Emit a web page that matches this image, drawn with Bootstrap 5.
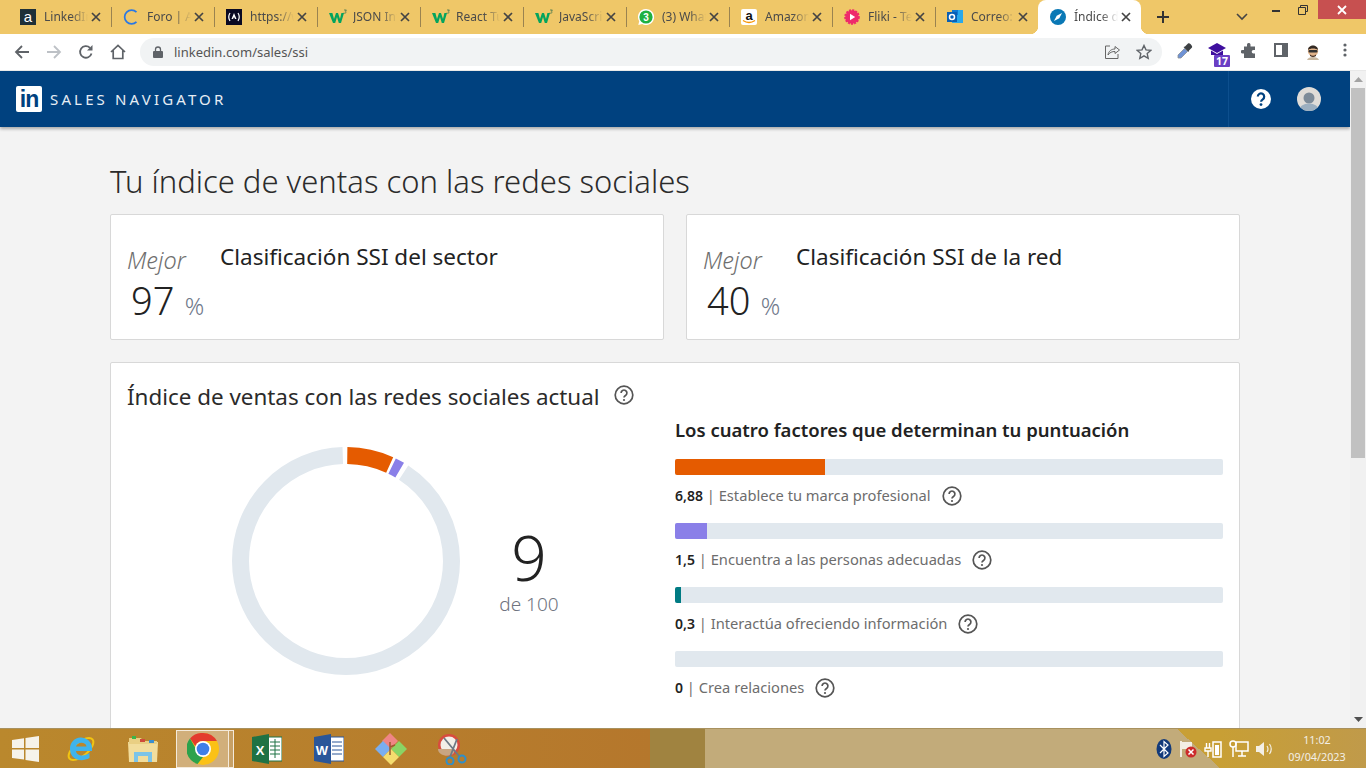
<!DOCTYPE html>
<html lang="es">
<head>
  <meta charset="UTF-8" />
  <meta name="viewport" content="width=device-width, initial-scale=1.0" />
  <title>Índice de ventas con las redes sociales</title>
  <link href="https://cdn.jsdelivr.net/npm/bootstrap@5.3.3/dist/css/bootstrap.min.css" rel="stylesheet">
  <style>
    html, body { height: 100%; overflow: hidden; }
    body { font-family: "Noto Sans", "Open Sans", sans-serif; background: #f3f3f3; color: #222; }
    .shell { height: 768px; }
    svg { flex: none; }

    /* browser chrome */
    .tabstrip { height: 34px; background: #efc768; padding-left: 8px; flex: none; }
    .btab { width: 103px; height: 34px; padding: 0 10px 0 12px; font-size: 12px; color: #4a4a4a; flex: none; position: relative; }
    .btab + .btab .tabsep { border-left: 1px solid #9a8350; height: 20px; margin: 0 11px 0 -12px; flex: none; }
    .btab-title { width: 44px; margin-left: 8px; white-space: nowrap; overflow: hidden; flex: none;
      -webkit-mask-image: linear-gradient(90deg, #000 62%, transparent 100%); mask-image: linear-gradient(90deg, #000 62%, transparent 100%); }
    .btab-w3 { margin-left: 6px; }
    .btab-x { width: 10px; height: 10px; margin-left: 3px; flex: none; }
    .btab-on { background: #fff; border-radius: 8px 8px 0 0; }
    .btab-on::before, .btab-on::after { content: ""; position: absolute; bottom: 0; width: 8px; height: 8px; }
    .btab-on::before { left: -8px; background: radial-gradient(circle at 0 0, transparent 8px, #fff 8.5px); }
    .btab-on::after { right: -8px; background: radial-gradient(circle at 100% 0, transparent 8px, #fff 8.5px); }
    .tab-plus { margin-left: 15px; width: 14px; height: 14px; }
    .tab-chev { margin-left: 66px; width: 12px; height: 8px; }
    .winctl { margin-left: auto; height: 19px; align-self: flex-start; }
    .winmin { width: 8px; height: 2px; background: #333; margin-right: 18px; margin-top: 2px; }
    .winmax { width: 10px; height: 10px; margin-right: 10px; }
    .winclose { width: 48px; height: 19px; background: #c75050; }

    .toolbar { height: 37px; background: #fff; padding: 3px 0 3px 0; flex: none; border-bottom: 1px solid #e8e8e8; }
    .tool-ic { width: 32px; display: flex; justify-content: center; flex: none; }
    .toolstart { padding-left: 6px; }
    .omni { width: 1022px; height: 28px; margin-left: 6px; background: #f1f3f4; border-radius: 14px; padding: 0 10px 0 13px; font-size: 13px; color: #555; flex: none; }
    .omni-url { margin-left: 11px; padding-top: 1px; }
    .omni-end { margin-left: auto; gap: 16px; }
    .toolright { padding-left: 7px; }
    .ext-badge { position: absolute; right: 3px; bottom: -6px; width: 16px; background: #6b3fc4; color: #fff; font-size: 10.5px; font-weight: 700; line-height: 12px; text-align: center; border-radius: 1px; }

    /* page */
    .viewport { flex: 1 1 auto; min-height: 0; overflow: hidden; }
    .pagearea { flex: 1 1 auto; min-width: 0; overflow: hidden; }
    .sn-header { height: 56px; background: #00417f; box-shadow: 0 2px 3px rgba(0,0,0,.3); padding-left: 16px; flex: none; position: relative; }
    .in-logo { width: 26px; height: 26px; background: #fff; border-radius: 2px; color: #00417f; font: 700 23px/27px "Liberation Sans", sans-serif; text-align: center; letter-spacing: -1px; }
    .sn-name { color: #e6edf4; font-size: 15px; letter-spacing: 3.15px; margin-left: 8px; }
    .sn-right { margin-left: auto; border-left: 1px solid #0d4f8e; height: 56px; padding-left: 22px; padding-right: 29px; gap: 26px; }
    .content-wrap { width: 1130px; margin-left: 110px; }
    .page-title { font-size: 31px; font-weight: 300; line-height: 40px; margin: 34px 0 13px; color: #2b2b2b; }
    .sn-card { border: 1px solid #d8d8d8; border-radius: 2px; background: #fff; }
    .rank-card { height: 126px; width: 554px; padding: 27px 16px 0; }
    .rank-left { width: 93px; flex: none; }
    .rank-mejor { font-size: 23.5px; font-style: italic; font-weight: 300; color: #6f6f6f; line-height: 36px; }
    .rank-num { font-size: 38px; font-weight: 300; line-height: 44px; color: #222; padding-left: 4px; }
    .rank-pct { font-size: 24px; font-weight: 300; color: #70788a; margin-left: 4px; }
    .rank-title { font-size: 22.5px; line-height: 30px; color: #222; }
    .score-card { margin-top: 22px; height: 420px; padding: 18px 16px 0; }
    .score-title { font-size: 22.4px; line-height: 32px; color: #2b2b2b; }
    .donut-col { width: 548px; flex: none; padding: 34px 0 0 105px; }
    .score-num { font-size: 62px; font-weight: 300; line-height: 69px; color: #222; }
    .score-of { font-size: 19px; font-weight: 300; color: #6f7480; line-height: 24px; }
    .score-box { width: 100px; margin-left: 19px; text-align: center; padding-bottom: 23px; }
    .factors-col { width: 548px; flex: none; padding-top: 4px; }
    .factors-title { font-size: 18.5px; font-weight: 600; line-height: 26px; color: #222; margin: 0 0 16px; }
    .factor { height: 64px; }
    .factor .progress { height: 16px; background: #e1e8ee; border-radius: 2px; }
    .factor-label { font-size: 14.7px; line-height: 20px; margin-top: 10px; color: #6d6d6d; }
    .factor-label b { color: #222; font-weight: 600; font-size: 14px; }
    .hl-q { width: 20px; height: 20px; margin-left: 11px; flex: none; }
    .hl-q.score-q { margin-top: -4px; margin-left: 14px; }
    .fill-o { background: #e55b00; }
    .fill-p { background: #8a7fe8; }
    .fill-t { background: #007b83; }

    /* scrollbar */
    .fakebar { width: 16px; background: #f1f1f1; flex: none; }
    .fakebar-up { height: 17px; }
    .fakebar-thumb { height: 370px; background: #c1c1c1; margin: 0 1px; }
    .fakebar-down { height: 17px; margin-top: auto; }

    /* taskbar */
    .taskbar { height: 40px; flex: none; border-top: 1px solid #a8915f;
      background:
        linear-gradient(90deg, #c89f35, #c09a4a) right / 146px 100% no-repeat,
        linear-gradient(to top right, transparent 50%, #c89f35 50%) 1177px 0 / 43px 100% no-repeat,
        linear-gradient(90deg, #ba882d 0, #b5772c 650px, #a08340 650px, #a08340 705px, #c2ab7a 705px); }
    .task-start { width: 50px; padding-left: 12px; }
    .task-ic { width: 62px; height: 39px; display: flex; align-items: center; justify-content: center; flex: none; }
    .task-on { width: 53px; height: 38px; margin-left: 2px; background: #d1af7b; border: 1px solid #f4eadb; }
    .task-sliver { width: 5px; height: 38px; border: 1px solid #f4eadb; border-left: 0; margin-right: 2px; background: #c7a065; }
    .task-tray { margin-left: auto; gap: 7px; padding-right: 13px; }
    .task-clock { color: #f3efe6; font-size: 10.8px; line-height: 17px; text-align: center; margin-top: -1px; width: 72px; }
  </style>
</head>
<body>
<svg width="0" height="0" class="d-none">
  <symbol id="x-ic" viewBox="0 0 10 10"><path d="M1 1l8 8M9 1l-8 8" stroke="#444" stroke-width="1.7" fill="none"/></symbol>
  <symbol id="w3-ic" viewBox="0 0 18 16"><path d="M0 4h3.4l1.6 6 2-6h2l2 6 1.4-6h2.6l-3 10h-2.2L8 8l-1.8 6H4z" fill="#04a45d"/><path d="M15 1h2.4l-1 1.2c.8.2 1.1 1.4-.1 1.9-.6.2-1.2.1-1.6-.2" stroke="#2b6b4c" stroke-width=".7" fill="none"/></symbol>
  <symbol id="q-ic" viewBox="0 0 20 20"><circle cx="10" cy="10" r="8.8" fill="none" stroke="#555" stroke-width="1.7"/><path d="M7.1 7.900a2.900 2.900 0 1 1 4.400 2.500c-1 .6-1.500 1-1.500 2.100" fill="none" stroke="#555" stroke-width="1.7"/><circle cx="10" cy="15" r="1.100" fill="#555"/></symbol>
</svg>

<div class="shell d-flex flex-column">
  <div class="tabstrip d-flex align-items-center">
    <div class="btab d-flex align-items-center">
      <svg width="16" height="16" viewBox="0 0 16 16"><rect width="16" height="16" fill="#1f3038"/><text x="8" y="13" text-anchor="middle" font-family="Liberation Sans" font-size="15" fill="#fff">a</text></svg>
      <span class="btab-title">LinkedIn</span><svg class="btab-x"><use href="#x-ic"/></svg>
    </div>
    <div class="btab d-flex align-items-center"><span class="tabsep"></span>
      <svg width="16" height="16" viewBox="0 0 16 16"><path d="M13.500 3.200A6.900 6.900 0 1 0 13.500 12.800" fill="none" stroke="#2a78e4" stroke-width="1.700"/></svg>
      <span class="btab-title">Foro | Alura</span><svg class="btab-x"><use href="#x-ic"/></svg>
    </div>
    <div class="btab d-flex align-items-center"><span class="tabsep"></span>
      <svg width="16" height="16" viewBox="0 0 16 16"><rect width="16" height="16" fill="#0a0a23"/><path d="M4 4Q1.500 8 4 12M12 4q2.500 4 0 8" stroke="#fff" stroke-width="1.200" fill="none"/><path d="M8 4l2.500 6H9L8 8l-1 2H5.500z" fill="#fff"/></svg>
      <span class="btab-title">https://www</span><svg class="btab-x"><use href="#x-ic"/></svg>
    </div>
    <div class="btab d-flex align-items-center"><span class="tabsep"></span>
      <svg width="18" height="16"><use href="#w3-ic"/></svg>
      <span class="btab-title btab-w3">JSON Intro</span><svg class="btab-x"><use href="#x-ic"/></svg>
    </div>
    <div class="btab d-flex align-items-center"><span class="tabsep"></span>
      <svg width="18" height="16"><use href="#w3-ic"/></svg>
      <span class="btab-title btab-w3">React Tutorial</span><svg class="btab-x"><use href="#x-ic"/></svg>
    </div>
    <div class="btab d-flex align-items-center"><span class="tabsep"></span>
      <svg width="18" height="16"><use href="#w3-ic"/></svg>
      <span class="btab-title btab-w3">JavaScript</span><svg class="btab-x"><use href="#x-ic"/></svg>
    </div>
    <div class="btab d-flex align-items-center"><span class="tabsep"></span>
      <svg width="16" height="16" viewBox="0 0 16 16"><path d="M8 0a8 8 0 0 0-6.800 12.200L.3 16l3.900-1A8 8 0 1 0 8 0z" fill="#fff"/><circle cx="8" cy="8" r="6.600" fill="#1fb141"/><text x="8" y="11.500" text-anchor="middle" font-family="Liberation Sans" font-weight="700" font-size="10" fill="#fff">3</text></svg>
      <span class="btab-title">(3) WhatsApp</span><svg class="btab-x"><use href="#x-ic"/></svg>
    </div>
    <div class="btab d-flex align-items-center"><span class="tabsep"></span>
      <svg width="16" height="16" viewBox="0 0 16 16"><rect width="16" height="16" rx="2" fill="#fff"/><text x="8" y="10.500" text-anchor="middle" font-family="Liberation Sans" font-weight="700" font-size="13" fill="#111">a</text><path d="M2 11.500q6 4 12 0" stroke="#f79400" stroke-width="1.300" fill="none"/></svg>
      <span class="btab-title">Amazon.es</span><svg class="btab-x"><use href="#x-ic"/></svg>
    </div>
    <div class="btab d-flex align-items-center"><span class="tabsep"></span>
      <svg width="16" height="16" viewBox="0 0 16 16"><circle cx="8" cy="8" r="6.800" fill="#ee2a6b" stroke="#ee2a6b" stroke-width="2" stroke-dasharray="2 1.200"/><path d="M6 4.800v6.400L11.200 8z" fill="#fff"/></svg>
      <span class="btab-title">Fliki - Text</span><svg class="btab-x"><use href="#x-ic"/></svg>
    </div>
    <div class="btab d-flex align-items-center"><span class="tabsep"></span>
      <svg width="16" height="16" viewBox="0 0 16 16"><rect x="5" y="1" width="11" height="13" fill="#29a8ea"/><rect x="5" y="1" width="6" height="5" fill="#0f78d4"/><rect y="3" width="10" height="10" fill="#0a5fb4"/><circle cx="5" cy="8" r="2.500" fill="none" stroke="#fff" stroke-width="1.500"/></svg>
      <span class="btab-title">Correo: Pablo</span><svg class="btab-x"><use href="#x-ic"/></svg>
    </div>
    <div class="btab btab-on d-flex align-items-center">
      <svg width="16" height="16" viewBox="0 0 16 16"><circle cx="8" cy="8" r="8" fill="#0a78b5"/><path d="M12 4L9.300 9.300 4 12l2.700-5.300z" fill="#fff"/></svg>
      <span class="btab-title">Índice de ventas</span><svg class="btab-x"><use href="#x-ic"/></svg>
    </div>
    <svg class="tab-plus" viewBox="0 0 14 14"><path d="M7 1v12M1 7h12" stroke="#333" stroke-width="2"/></svg>
    <svg class="tab-chev" viewBox="0 0 12 8"><path d="M1 1l5 5 5-5" stroke="#444" stroke-width="1.600" fill="none"/></svg>
    <div class="winctl d-flex align-items-center">
      <span class="winmin"></span>
      <svg class="winmax" viewBox="0 0 10 10"><path d="M2.500 2.500V.5h7v6h-2M.5 2.500h7v7h-7z" fill="none" stroke="#333" stroke-width="1"/></svg>
      <span class="winclose d-flex align-items-center justify-content-center"><svg width="10" height="10" viewBox="0 0 10 10"><path d="M1 1l8 8M9 1l-8 8" stroke="#fff" stroke-width="1.800"/></svg></span>
    </div>
  </div>

  <div class="toolbar d-flex align-items-center">
    <div class="d-flex toolstart">
      <span class="tool-ic"><svg width="16" height="16" viewBox="0 0 16 16"><path d="M15 8H2M8 2L2 8l6 6" stroke="#5f6368" stroke-width="1.800" fill="none"/></svg></span>
      <span class="tool-ic"><svg width="16" height="16" viewBox="0 0 16 16"><path d="M1 8h13M8 2l6 6-6 6" stroke="#bdc1c6" stroke-width="1.800" fill="none"/></svg></span>
      <span class="tool-ic"><svg width="16" height="16" viewBox="0 0 16 16"><path d="M13.500 9.500A5.800 5.800 0 1 1 12 3.800" stroke="#5f6368" stroke-width="1.800" fill="none"/><path d="M14.500 1v5.500H9z" fill="#5f6368"/></svg></span>
      <span class="tool-ic"><svg width="16" height="16" viewBox="0 0 16 16"><path d="M1 8l7-6.500L15 8M3.200 6.500V14.500h9.600V6.500" stroke="#5f6368" stroke-width="1.700" fill="none"/></svg></span>
    </div>
    <div class="omni d-flex align-items-center">
      <svg width="10" height="12" viewBox="0 0 10 12"><path d="M2.500 5V3.500a2.500 2.500 0 0 1 5 0V5" fill="none" stroke="#5f6368" stroke-width="1.300"/><rect y="5" width="10" height="7" rx="1" fill="#5f6368"/></svg>
      <span class="omni-url">linkedin.com/sales/ssi</span>
      <span class="omni-end d-flex align-items-center">
        <svg width="16" height="16" viewBox="0 0 16 16"><path d="M6 2H1.500v12.500H14V10" stroke="#666" fill="none"/><path d="M4 11c.5-4 3.500-6 7-6V2.500L15.500 6 11 9.500V7.500C8.500 7.300 5.500 8.500 4 11z" stroke="#666" fill="none"/></svg>
        <svg width="16" height="16" viewBox="0 0 16 16"><path d="M8 1.500l2 4.400 4.700.5-3.500 3.200 1 4.700L8 11.900l-4.200 2.400 1-4.700-3.500-3.200 4.700-.5z" stroke="#5f6368" stroke-width="1.400" fill="none"/></svg>
      </span>
    </div>
    <div class="d-flex toolright">
      <span class="tool-ic"><svg width="16" height="16" viewBox="0 0 16 16"><path d="M7.500 5.500l3 3L4 15H1v-3z" fill="#6f93d6" stroke="#8a8f96" stroke-width=".8"/><path d="M6.500 4l1.500-.5 3-3c1.500-1 5 2.500 4 4l-3 3-.5 1.500z" fill="#3d4043"/></svg></span>
      <span class="tool-ic position-relative"><svg width="18" height="14" viewBox="0 0 18 14"><path d="M9 0l9 5-9 5-9-5z" fill="#3f0f9e"/><path d="M3 7.500V12h12V7.500L9 11z" fill="#3f0f9e"/></svg><span class="ext-badge">17</span></span>
      <span class="tool-ic"><svg width="16" height="16" viewBox="0 0 16 16"><path d="M6 1.500a1.800 1.800 0 0 1 3.500 0V3.500H14V7h-1.500a1.800 1.800 0 0 0 0 3.600H14V15H3v-4.500H1.500a1.800 1.800 0 0 1 0-3.600H3V3.500h3z" fill="#5f6368"/></svg></span>
      <span class="tool-ic"><svg width="14" height="14" viewBox="0 0 14 14"><rect x="1" y="1" width="12" height="12" fill="#fff" stroke="#5f6368" stroke-width="2"/><rect x="8" y="1" width="5" height="12" fill="#5f6368"/></svg></span>
      <span class="tool-ic"><svg width="16" height="18" viewBox="0 0 16 18"><path d="M2 17c1-4 11-4 12 0z" fill="#c9b8a0"/><circle cx="8" cy="8" r="5.200" fill="#e2b48a"/><path d="M3 7c0-6 10-6 10 0-2-2-8-2-10 0z" fill="#332a24"/><rect x="3.500" y="7" width="9" height="2.500" fill="#333" rx="1"/><path d="M5 11.500q3 2.500 6 0V13q-3 2-6 0z" fill="#4a3325"/></svg></span>
      <span class="tool-ic"><svg width="4" height="14" viewBox="0 0 4 14"><circle cx="2" cy="2" r="1.600" fill="#5f6368"/><circle cx="2" cy="7" r="1.600" fill="#5f6368"/><circle cx="2" cy="12" r="1.600" fill="#5f6368"/></svg></span>
    </div>
  </div>

  <div class="viewport d-flex">
    <div class="pagearea d-flex flex-column">
      <header class="sn-header d-flex align-items-center">
        <span class="in-logo">in</span>
        <span class="sn-name">SALES NAVIGATOR</span>
        <div class="sn-right d-flex align-items-center">
          <svg width="20" height="20" viewBox="0 0 20 20"><circle cx="10" cy="10" r="10" fill="#fff"/><path d="M6.800 7.600a3.200 3.200 0 1 1 5 2.700c-1.200.8-1.700 1.200-1.700 2.500" fill="none" stroke="#00417f" stroke-width="2.200"/><circle cx="10" cy="15.600" r="1.400" fill="#00417f"/></svg>
          <svg width="24" height="24" viewBox="0 0 24 24"><defs><clipPath id="avatar-clip"><circle cx="12" cy="12" r="12"/></clipPath></defs><circle cx="12" cy="12" r="12" fill="#dfdcd8"/><g clip-path="url(#avatar-clip)"><circle cx="12" cy="11" r="5.500" fill="#7d8b99"/><ellipse cx="12" cy="23" rx="10" ry="6.500" fill="#9cafc0"/></g></svg>
        </div>
      </header>

      <main class="content-wrap">
        <h1 class="page-title">Tu índice de ventas con las redes sociales</h1>
        <div class="d-flex justify-content-between">
          <div class="sn-card rank-card d-flex">
            <div class="rank-left">
              <div class="rank-mejor">Mejor</div>
              <div class="rank-num">97<span class="rank-pct"> %</span></div>
            </div>
            <div class="rank-title">Clasificación SSI del sector</div>
          </div>
          <div class="sn-card rank-card d-flex">
            <div class="rank-left">
              <div class="rank-mejor">Mejor</div>
              <div class="rank-num">40<span class="rank-pct"> %</span></div>
            </div>
            <div class="rank-title">Clasificación SSI de la red</div>
          </div>
        </div>

        <section class="sn-card score-card">
          <div class="d-flex align-items-center">
            <span class="score-title">Índice de ventas con las redes sociales actual</span>
            <svg class="hl-q score-q"><use href="#q-ic"/></svg>
          </div>
          <div class="d-flex">
            <div class="donut-col d-flex align-items-start">
              <svg width="228" height="228" viewBox="0 0 228 228">
                <g transform="rotate(-90 114 114)" fill="none" stroke-width="17">
                  <circle cx="114" cy="114" r="105.500" pathLength="100" stroke="#e1e8ee" stroke-dasharray="90.300 100" stroke-dashoffset="-9.200"/>
                  <circle cx="114" cy="114" r="105.500" pathLength="100" stroke="#e55b00" stroke-dasharray="6.600 100" stroke-dashoffset="-.2"/>
                  <circle cx="114" cy="114" r="105.500" pathLength="100" stroke="#8a7fe8" stroke-dasharray="1.300 100" stroke-dashoffset="-7.200"/>
                </g>
              </svg>
              <div class="score-box align-self-center">
                <div class="score-num">9</div>
                <div class="score-of">de 100</div>
              </div>
            </div>
            <div class="factors-col">
              <h2 class="factors-title">Los cuatro factores que determinan tu puntuación</h2>
              <div class="factor">
                <div class="progress"><div class="progress-bar fill-o" style="width:27.4%"></div></div>
                <div class="factor-label d-flex align-items-center"><span><b>6,88</b> | Establece tu marca profesional</span><svg class="hl-q"><use href="#q-ic"/></svg></div>
              </div>
              <div class="factor">
                <div class="progress"><div class="progress-bar fill-p" style="width:5.8%"></div></div>
                <div class="factor-label d-flex align-items-center"><span><b>1,5</b> | Encuentra a las personas adecuadas</span><svg class="hl-q"><use href="#q-ic"/></svg></div>
              </div>
              <div class="factor">
                <div class="progress"><div class="progress-bar fill-t" style="width:1.1%"></div></div>
                <div class="factor-label d-flex align-items-center"><span><b>0,3</b> | Interactúa ofreciendo información</span><svg class="hl-q"><use href="#q-ic"/></svg></div>
              </div>
              <div class="factor">
                <div class="progress"><div class="progress-bar" style="width:0"></div></div>
                <div class="factor-label d-flex align-items-center"><span><b>0</b> | Crea relaciones</span><svg class="hl-q"><use href="#q-ic"/></svg></div>
              </div>
            </div>
          </div>
        </section>
      </main>
    </div>
    <div class="fakebar d-flex flex-column">
      <div class="fakebar-up d-flex align-items-center justify-content-center"><svg width="9" height="5" viewBox="0 0 9 5"><path d="M4.500 0L9 5H0z" fill="#a3a3a3"/></svg></div>
      <div class="fakebar-thumb"></div>
      <div class="fakebar-down d-flex align-items-center justify-content-center"><svg width="9" height="5" viewBox="0 0 9 5"><path d="M4.500 5L9 0H0z" fill="#505050"/></svg></div>
    </div>
  </div>

  <div class="taskbar d-flex align-items-center">
    <div class="task-start d-flex align-items-center flex-none">
      <svg width="27" height="26" viewBox="0 0 27 26"><path d="M0 4l12-1.700V12H0zM13.500 2.100L27 0v12H13.500zM0 13.500h12v10L0 22zM13.500 13.500H27V26l-13.500-2z" fill="#f6f3ea"/></svg>
    </div>
    <span class="task-ic"><svg width="32" height="32" viewBox="0 0 32 32"><ellipse cx="16" cy="16" rx="15" ry="7" transform="rotate(-40 16 16)" fill="none" stroke="#f2c511" stroke-width="2"/><path d="M5 16a11 11 0 0 1 22-1v3H11c.5 5 8 6 13.500 2v5c-9 5-19.500 1-19.500-9zm6-2.500h10.500c-.5-5-9.500-5-10.500 0z" fill="#3fb4ec"/></svg></span>
    <span class="task-ic"><svg width="32" height="30" viewBox="0 0 32 30"><path d="M1 8h30l-1 20H2z" fill="#f2dd9c"/><path d="M2 4h12l2 3h14v3H2z" fill="#e9cf83"/><rect x="5" y="2" width="4" height="3" fill="#3bb54a"/><rect x="13" y="5" width="5" height="3" fill="#d04a3a"/><rect x="22" y="6" width="5" height="3" fill="#3b8fd0"/><path d="M7 18h18v10h-4v-6H11v6H7z" fill="#7cc4e8"/></svg></span>
    <span class="task-ic task-on"><svg width="32" height="32" viewBox="0 0 32 32"><circle cx="16" cy="16" r="16" fill="#fbc116"/><path d="M16 0a16 16 0 0 1 13.900 8H16a8 8 0 0 0-7.500 5.200L3 5.500A16 16 0 0 1 16 0z" fill="#e33b2e"/><path d="M3 5.500l6 10.500a8 8 0 0 0 7 8L10.500 31A16 16 0 0 1 3 5.500z" fill="#2ca24c"/><circle cx="16" cy="16" r="8" fill="#fff"/><circle cx="16" cy="16" r="6.300" fill="#3f7fe8"/></svg></span>
    <span class="task-sliver flex-none"></span>
    <span class="task-ic"><svg width="30" height="30" viewBox="0 0 30 30"><rect x="14" y="3" width="16" height="24" fill="#fff" stroke="#1f7244"/><path d="M18 8h10M18 12h10M18 16h10M18 20h10M23 5v19" stroke="#1f7244"/><path d="M0 3l17-3v30L0 27z" fill="#1f7244"/><text x="8" y="21" text-anchor="middle" font-family="Liberation Sans" font-weight="700" font-size="13" fill="#fff">X</text></svg></span>
    <span class="task-ic"><svg width="30" height="30" viewBox="0 0 30 30"><rect x="14" y="3" width="16" height="24" fill="#fff" stroke="#2a5699"/><path d="M18 8h10M18 12h10M18 16h10M18 20h10" stroke="#2a5699"/><path d="M0 3l17-3v30L0 27z" fill="#2a5699"/><text x="8" y="21" text-anchor="middle" font-family="Liberation Sans" font-weight="700" font-size="13" fill="#fff">W</text></svg></span>
    <span class="task-ic"><svg width="32" height="32" viewBox="0 0 32 32"><path d="M16 16L8 8l8-8 8 8z" fill="#ef8585" transform="translate(-1 0)"/><path d="M8 8l8 8-8 8-8-8z" fill="#7aaef0"/><path d="M24 8l8 8-8 8-8-8z" fill="#8ad465"/><path d="M16 16l8 8-8 8-8-8z" fill="#f5dc6e"/><path d="M15 9v13M15 14l5-2" stroke="#9c5b30" stroke-width="1.500" fill="none"/></svg></span>
    <span class="task-ic"><svg width="32" height="32" viewBox="0 0 32 32"><circle cx="12" cy="12" r="11" fill="#d94b3f"/><circle cx="12" cy="12" r="8.500" fill="#f3efe8"/><path d="M1 16c0 7 12 9 16 4v-4z" fill="#c9a582"/><path d="M7 5l15 18M20 6L13 24" stroke="#6f7a85" stroke-width="1.800"/><circle cx="25" cy="26" r="3.500" fill="none" stroke="#2f8fc9" stroke-width="2"/><circle cx="13" cy="28" r="3.500" fill="none" stroke="#2f8fc9" stroke-width="2"/></svg></span>

    <div class="task-tray d-flex align-items-center">
      <svg width="16" height="20" viewBox="0 0 16 20"><ellipse cx="8" cy="10" rx="7.500" ry="10" fill="#123a7a"/><path d="M4 6l8 8-4 3.500V2.500L12 6l-8 8" stroke="#fff" stroke-width="1.200" fill="none"/></svg>
      <svg width="18" height="18" viewBox="0 0 18 18"><path d="M2 1v16" stroke="#fff" stroke-width="1.600"/><path d="M3 2h10v7H3z" fill="#f3efe6"/><circle cx="12" cy="12" r="5.500" fill="#cc2b2b"/><path d="M9.500 9.500l5 5M14.500 9.500l-5 5" stroke="#fff" stroke-width="1.500"/></svg>
      <svg width="18" height="18" viewBox="0 0 18 18"><rect x="9" y="2" width="8" height="15" fill="none" stroke="#fff" stroke-width="1.500"/><rect x="11" y="5" width="4" height="10" fill="#fff"/><path d="M1 8h6v3H1zM2.500 3v5M5.500 3v5M4 11v6" stroke="#fff" stroke-width="1.400" fill="none"/></svg>
      <svg width="20" height="18" viewBox="0 0 20 18"><rect x="7" y="2" width="12" height="9" fill="none" stroke="#fff" stroke-width="1.500"/><circle cx="4" cy="4" r="3" fill="none" stroke="#fff" stroke-width="1.500"/><path d="M4 7v10M9 16h8M13 11v5" stroke="#fff" stroke-width="1.500"/></svg>
      <svg width="18" height="16" viewBox="0 0 18 16"><path d="M0 5h3l5-4v14l-5-4H0z" fill="#f3efe6"/><path d="M11 5q2 3 0 6M13.500 3q3.500 5 0 10" stroke="#f3efe6" fill="none" stroke-width="1.200"/></svg>
      <div class="task-clock"><div>11:02</div><div>09/04/2023</div></div>
    </div>
  </div>
</div>
<script src="https://cdn.jsdelivr.net/npm/bootstrap@5.3.3/dist/js/bootstrap.bundle.min.js"></script>
</body>
</html>
